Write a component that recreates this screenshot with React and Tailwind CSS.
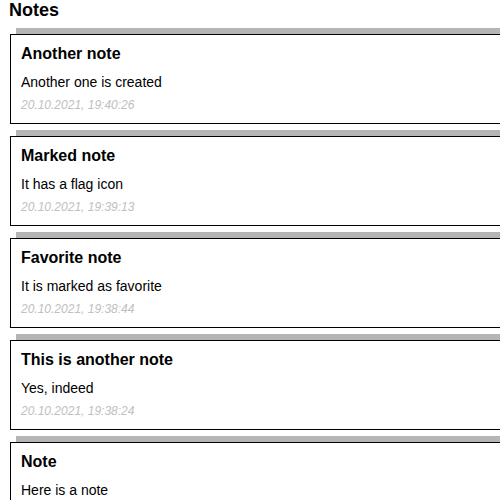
const notes = [
  { title: 'Another note', body: 'Another one is created', date: '20.10.2021, 19:40:26' },
  { title: 'Marked note', body: 'It has a flag icon', date: '20.10.2021, 19:39:13' },
  { title: 'Favorite note', body: 'It is marked as favorite', date: '20.10.2021, 19:38:44' },
  { title: 'This is another note', body: 'Yes, indeed', date: '20.10.2021, 19:38:24' },
  { title: 'Note', body: 'Here is a note', date: '20.10.2021, 19:38:02' },
]

export default function App() {
  return (
    <div className="h-[500px] w-[500px] overflow-hidden bg-white font-['Liberation_Sans',Arial,sans-serif] text-black">
      <h1 className="pt-px pl-[9px] text-[18px] font-bold leading-[18px]">Notes</h1>
      <div className="mt-[15px] flex flex-col gap-3 pl-[10px]">
        {notes.map((note) => (
          <div
            key={note.date}
            className="w-[560px] shrink-0 border border-black bg-white px-[10px] pt-[10px] pb-[11px] shadow-[6px_-6px_0_#b5b5b5]"
          >
            <h2 className="text-[16px] font-bold leading-[18px]">{note.title}</h2>
            <p className="mt-[11px] text-[14px] leading-[16px]">{note.body}</p>
            <p className="mt-[8px] text-[12px] italic leading-[14px] text-[#c0c0c0]">{note.date}</p>
          </div>
        ))}
      </div>
    </div>
  )
}
